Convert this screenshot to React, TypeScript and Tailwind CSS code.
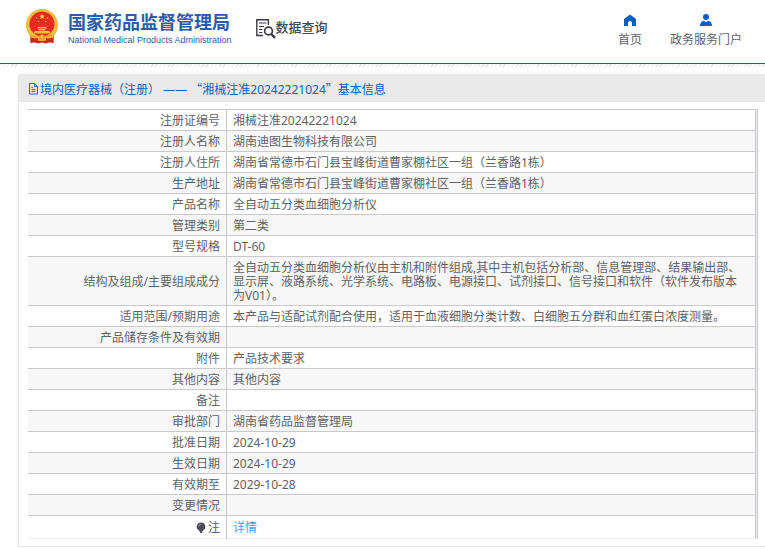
import React from 'react';

type Entry = { label: string; value: string };

const entries: Entry[] = [
  { label: '注册证编号', value: '湘械注准20242221024' },
  { label: '注册人名称', value: '湖南迪图生物科技有限公司' },
  { label: '注册人住所', value: '湖南省常德市石门县宝峰街道曹家棚社区一组（兰香路1栋）' },
  { label: '生产地址', value: '湖南省常德市石门县宝峰街道曹家棚社区一组（兰香路1栋）' },
  { label: '产品名称', value: '全自动五分类血细胞分析仪' },
  { label: '管理类别', value: '第二类' },
  { label: '型号规格', value: 'DT-60' },
  {
    label: '结构及组成/主要组成成分',
    value:
      '全自动五分类血细胞分析仪由主机和附件组成,其中主机包括分析部、信息管理部、结果输出部、显示屏、液路系统、光学系统、电路板、电源接口、试剂接口、信号接口和软件（软件发布版本为V01）。',
  },
  { label: '适用范围/预期用途', value: '本产品与适配试剂配合使用，适用于血液细胞分类计数、白细胞五分群和血红蛋白浓度测量。' },
  { label: '产品储存条件及有效期', value: '' },
  { label: '附件', value: '产品技术要求' },
  { label: '其他内容', value: '其他内容' },
  { label: '备注', value: '' },
  { label: '审批部门', value: '湖南省药品监督管理局' },
  { label: '批准日期', value: '2024-10-29' },
  { label: '生效日期', value: '2024-10-29' },
  { label: '有效期至', value: '2029-10-28' },
  { label: '变更情况', value: '' },
];

function Emblem() {
  return (
    <svg viewBox="0 0 32 35" className="h-[35px] w-8 shrink-0" aria-hidden="true">
      <path d="M4 24L28 24L27.500 34Q24 32.500 20 34.500L16 33.500L12 34.500Q8 32.500 4.500 34Z" fill="#d8231d" />
      <circle cx="16" cy="16" r="16" fill="#efb935" />
      <circle cx="16" cy="16" r="14" fill="none" stroke="#f8d362" strokeWidth="1" strokeDasharray="2 1" />
      <circle cx="16" cy="15" r="12.500" fill="#e62b20" />
      <path d="M16 4.800l.8 1.700 1.900.2-1.400 1.300.4 1.900-1.700-.9-1.700.9.4-1.900-1.400-1.300 1.900-.2z" fill="#f8cf4a" />
      <g fill="#f4bd3c">
        <circle cx="10.500" cy="9" r=".8" />
        <circle cx="21.500" cy="9" r=".8" />
        <circle cx="12.500" cy="12.500" r=".8" />
        <circle cx="19.500" cy="12.500" r=".8" />
        <path d="M12 18h8l1 1.500H11zM12.500 20h7v1.500h-7zM9 22h14l2 2.500H7z" />
      </g>
      <path d="M3 25q6 2 10 2l3-1.500 3 1.500q4 0 10-2l-2 4q-5 2-7 1l-4 2-4-2q-2 1-7-1z" fill="#f0ad2f" />
      <path d="M5.500 28.500q4 1.500 6.500.5v5q-4-1.500-7.500 0zM26.500 28.500q-4 1.500-6.500.5v5q4-1.500 7.500 0z" fill="#d8231d" />
      <circle cx="16" cy="28" r="2.300" fill="#f4bd3c" stroke="#d88b22" strokeWidth=".7" />
    </svg>
  );
}

function SearchDocIcon() {
  return (
    <svg viewBox="0 0 20 20" className="h-5 w-5 shrink-0" fill="none" stroke="#3a3a46" aria-hidden="true">
      <path d="M7 16.500H.800V.800h11.600V6" strokeWidth="1.400" />
      <path d="M3 4h7.500M3 7.500h5M3 10.500h3.500M3 13.500h3.500" strokeWidth="1.200" />
      <circle cx="12.500" cy="12" r="3.900" strokeWidth="1.700" />
      <path d="M15.300 15l3.700 3.800" strokeWidth="2.400" />
    </svg>
  );
}

function HomeIcon() {
  return (
    <svg viewBox="0 0 12 12" className="h-3 w-3" aria-hidden="true">
      <path d="M6 .5L0 5v7h4V8.500Q4 7 6 7t2 1.500V12h4V5z" fill="#0a5fc0" />
    </svg>
  );
}

function UserIcon() {
  return (
    <svg viewBox="0 0 12 12" className="h-3 w-3" aria-hidden="true">
      <circle cx="6" cy="3" r="3" fill="#0a5fc0" />
      <path d="M0 12Q0 8 3.500 6.800L6 8l2.500-1.200Q12 8 12 12z" fill="#0a5fc0" />
    </svg>
  );
}

function DocIcon() {
  return (
    <svg viewBox="0 0 12 12" className="h-3 w-3 shrink-0" fill="none" stroke="#1a68c4" aria-hidden="true">
      <path d="M1.500.5h5l3 3v7.500h-8zM6.500.5v3h3M3.500 4.500h1.500M3.500 6.500h4M3.500 8.500h4" />
    </svg>
  );
}

function BulbIcon() {
  return (
    <svg viewBox="0 0 10 12" className="h-3 w-2.5" aria-hidden="true">
      <path d="M5 .5a4.200 4.200 0 0 1 2.300 7.800L6.300 9.200v1.300L5 11.300l-1.300-.8V9.200L2.700 8.300A4.200 4.200 0 0 1 5 .5z" fill="#4b4d52" />
      <path d="M2.500 4.300Q3 2.500 4.800 2.200" fill="none" stroke="#c8c8c8" strokeWidth=".8" />
    </svg>
  );
}

const labelCell =
  'w-[199px] border-r border-b border-r-[#c9c9c9] px-1.5 text-right font-normal align-middle';
const valueCell = 'border-r border-b border-r-[#c9c9c9] pr-3 pl-1.5 align-middle';

export default function App() {
  return (
    <div className="bg-white font-['Noto_Sans','Noto_Sans_CJK_SC',sans-serif] text-xs text-[#606266]">
      <header className="flex h-16 items-start justify-between border-b border-[#0a5fb8] pr-[23px] pl-[26px]">
        <div className="flex items-start">
          <a href="#" className="flex items-start gap-2.5 pt-[9px] text-[#2b5caa]">
            <Emblem />
            <span className="flex flex-col whitespace-nowrap pt-1">
              <span className="text-lg leading-[18px] font-bold">国家药品监督管理局</span>
              <span className="pt-[3px] font-['Liberation_Sans',sans-serif] text-[9px] leading-[12px]">
                National Medical Products Administration
              </span>
            </span>
          </a>
          <a href="#" className="ml-6 flex items-start pt-[19px] text-[#45464a]">
            <SearchDocIcon />
            <span className="text-[13px] leading-4 font-medium">数据查询</span>
          </a>
        </div>
        <nav className="flex gap-7 pt-3.5">
          <a href="#" className="flex flex-col items-center gap-[5px]">
            <HomeIcon />
            <span className="leading-[18px]">首页</span>
          </a>
          <a href="#" className="flex flex-col items-center gap-[5px]">
            <UserIcon />
            <span className="leading-[18px]">政务服务门户</span>
          </a>
        </nav>
      </header>
      <div className="h-[3px] bg-[repeating-linear-gradient(135deg,#e6e6e6_0px,#e6e6e6_1px,#ffffff_1px,#ffffff_3px)]" />

      <main className="mt-[7px] ml-[18px] border-b border-l border-[#e6e6e6] pb-[7px] shadow-[0_0_4px_#eeeeee]">
        <h1 className="flex h-7 items-center bg-[#e9e9e9] pt-0.5 pl-[9px] font-normal text-[#0a5fc0]">
          <DocIcon />
          <span>
            境内医疗器械（注册） —— <span className="font-['Noto_Sans_CJK_SC',sans-serif]">“</span>
            湘械注准20242221024
            <span className="font-['Noto_Sans_CJK_SC',sans-serif]">”</span>基本信息
          </span>
        </h1>
        <div className="mt-[7px] mr-[7px] ml-[9px] border-r border-[#c9c9d0] bg-[#ebebf3] pr-px">
          <table className="w-full table-fixed border-separate border-spacing-0 border-t border-[#c9c9c9] bg-white leading-[14px]">
            <tbody>
              {entries.map(({ label, value }) => (
                <tr key={label} className="h-[21px] even:bg-[#f7f7f7]">
                  <th scope="row" className={`${labelCell} border-b-[#c9c9c9] pt-1 pb-0.5`}>
                    {label}
                  </th>
                  <td className={`${valueCell} border-b-[#c9c9c9] pt-1 pb-0.5`}>{value}</td>
                </tr>
              ))}
              <tr className="h-[23px]">
                <th scope="row" className={`${labelCell} border-b-[#ebebf3] pt-1 pb-0.5`}>
                  <span className="flex items-center justify-end gap-0.5">
                    <BulbIcon />注
                  </span>
                </th>
                <td className={`${valueCell} border-b-[#ebebf3] pt-1 pb-0.5`}>
                  <a href="#" className="text-[#409eff]">
                    详情
                  </a>
                </td>
              </tr>
            </tbody>
          </table>
        </div>
      </main>
    </div>
  );
}
